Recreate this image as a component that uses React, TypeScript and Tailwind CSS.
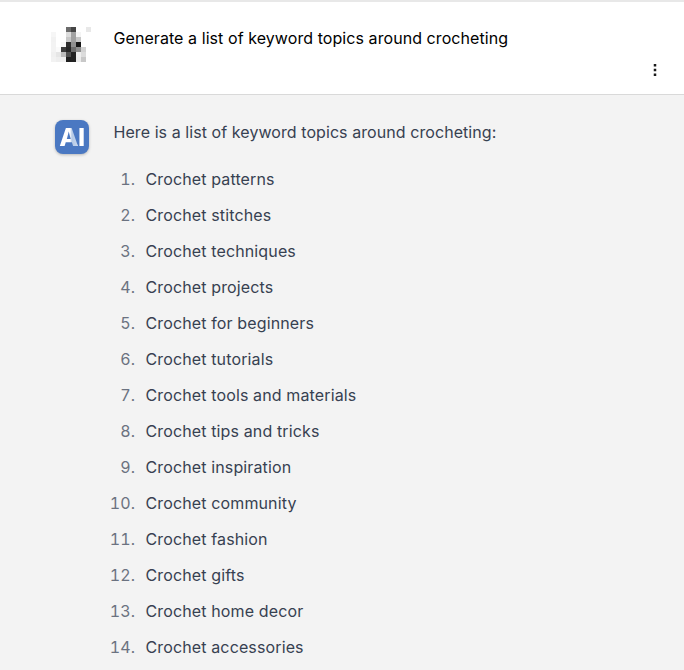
const AVATAR_ROWS = [
  ['#ffffff', '#ffffff', '#ffffff', '#6b6b6b', '#454545', '#ffffff', '#ffffff', '#e8e8e8'],
  ['#f6f6f6', '#ffffff', '#ffffff', '#dcdcdc', '#a2a2a2', '#f4f4f4', '#ffffff', '#ffffff'],
  ['#f2f2f2', '#ffffff', '#ffffff', '#c8c8c8', '#a0a0a0', '#c6c6c6', '#ffffff', '#ffffff'],
  ['#f3f3f3', '#ffffff', '#f8f8f8', '#2e2e2e', '#8f8f8f', '#161616', '#ffffff', '#ffffff'],
  ['#f3f3f3', '#fafafa', '#3c3c3c', '#262626', '#6c6c6c', '#8e8e8e', '#d2d2d2', '#ffffff'],
  ['#f0f0f0', '#e6e6e6', '#bdbdbd', '#505050', '#222222', '#eeeeee', '#dcdcdc', '#ffffff'],
  ['#f2f2f2', '#eeeeee', '#f0f0f0', '#202020', '#222222', '#ececec', '#c8c8c8', '#ffffff'],
];

const TOPICS = [
  'Crochet patterns',
  'Crochet stitches',
  'Crochet techniques',
  'Crochet projects',
  'Crochet for beginners',
  'Crochet tutorials',
  'Crochet tools and materials',
  'Crochet tips and tricks',
  'Crochet inspiration',
  'Crochet community',
  'Crochet fashion',
  'Crochet gifts',
  'Crochet home decor',
  'Crochet accessories',
];

const PixelAvatar = () => (
  <svg width="40" height="35" viewBox="0 0 40 35" shapeRendering="crispEdges" className="mt-px shrink-0">
    {AVATAR_ROWS.map((row, y) =>
      row.map((fill, x) => <rect key={`${x},${y}`} x={x * 5} y={y * 5} width="5" height="5" fill={fill} />),
    )}
  </svg>
);

const AiLogo = () => (
  <div className="ml-1 mr-[24.5px] flex h-[34px] w-[34px] shrink-0 items-center justify-center rounded-lg bg-[#4a78c2] shadow-[0_1px_3px_rgba(0,0,0,0.25)]">
    <span className="bg-[linear-gradient(90deg,#ffffff_0%,#ffffff_42%,#b4c9e6_50%,#c4d5ec_68%,#ffffff_72%)] bg-clip-text text-[25px] leading-none font-extrabold tracking-[-0.5px] text-transparent">
      AI
    </span>
  </div>
);

const App = () => {
  return (
    <div className="h-[670px] w-full overflow-hidden bg-[#f3f3f3] font-['Inter',sans-serif] text-base tracking-[0.07px]">
      <div className="relative h-[95px] border-t-2 border-b border-t-[#e8e8e8] border-b-[#d9d9d9] bg-white pl-[51px]">
        <div className="flex pt-6">
          <PixelAvatar />
          <p className="ml-[22.5px] leading-6 text-black">Generate a list of keyword topics around crocheting</p>
        </div>
        <svg width="4" height="12" viewBox="0 0 4 12" className="absolute top-[62px] right-[27px]">
          <rect x="0.75" y="0" width="2.5" height="2.5" fill="#1a1a1a" />
          <rect x="0.75" y="4.75" width="2.5" height="2.5" fill="#1a1a1a" />
          <rect x="0.75" y="9.5" width="2.5" height="2.5" fill="#1a1a1a" />
        </svg>
      </div>
      <div className="flex pt-[25px] pl-[51px]">
        <AiLogo />
        <div className="text-[#374151]">
          <p className="mb-[23px] leading-6">Here is a list of keyword topics around crocheting:</p>
          <ol className="flex list-decimal flex-col gap-3 pl-[26px] tracking-[0.13px] marker:text-[#6b7280]">
            {TOPICS.map((topic) => (
              <li key={topic} className="pl-[6px] leading-6">
                {topic}
              </li>
            ))}
          </ol>
        </div>
      </div>
    </div>
  );
};

export default App;
